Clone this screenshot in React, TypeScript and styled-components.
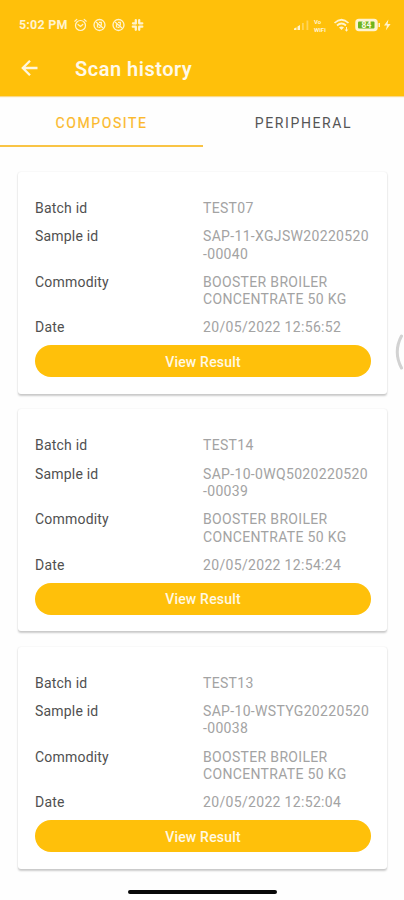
import React from "react";
import styled, { createGlobalStyle } from "styled-components";

const AMBER = "#ffc00a";
const CREAM = "#fff3cf";

const GlobalStyle = createGlobalStyle`
  * { box-sizing: border-box; }
  body { margin: 0; background: #fefefe; font-family: Roboto, sans-serif; }
`;

const Screen = styled.div`
  position: relative;
  display: flex;
  flex-direction: column;
  width: 404px;
  height: 900px;
  overflow: hidden;
  background: #fefefe;
`;

const Header = styled.header`
  flex: none;
  height: 96px;
  background: ${AMBER};
  box-shadow: 0 1px 1px #f9d98b;
`;

const StatusBar = styled.div`
  display: flex;
  align-items: center;
  justify-content: space-between;
  height: 34px;
  padding: 16px 12px 0 19px;
  color: ${CREAM};
`;

const StatusGroup = styled.div<{ $gap: number }>`
  display: flex;
  align-items: center;
  gap: ${(p) => p.$gap}px;
  svg { display: block; }
`;

const Clock = styled.span`
  width: 49px;
  font-size: 12.5px;
  font-weight: 700;
  line-height: 18px;
  white-space: nowrap;
  letter-spacing: 0.2px;
`;

const AppBar = styled.div`
  display: flex;
  align-items: center;
  height: 68px;
  padding: 0 21px;
  gap: 36px;
`;

const BackButton = styled.button`
  display: flex;
  width: 18px;
  height: 18px;
  padding: 0;
  border: 0;
  background: none;
`;

const Title = styled.h1`
  margin: 2px 0 0;
  color: #fff9e8;
  font-size: 20px;
  font-weight: 600;
  line-height: 24px;
  letter-spacing: 0.5px;
`;

const Tabs = styled.nav`
  display: flex;
  flex: none;
  height: 51px;
`;

const Tab = styled.button<{ $active?: boolean }>`
  flex: none;
  width: ${(p) => (p.$active ? 203 : 201)}px;
  padding: 4px 0 0;
  border: 0;
  border-bottom: 2px solid ${(p) => (p.$active ? "#f9c445" : "transparent")};
  background: none;
  color: ${(p) => (p.$active ? "#fbb92c" : "#555")};
  font-family: inherit;
  font-size: 14px;
  font-weight: 400;
  letter-spacing: 1.6px;
  -webkit-text-stroke: ${(p) => (p.$active ? "0.2px" : "0")};
`;

const List = styled.main`
  display: flex;
  flex-direction: column;
  gap: 15.4px;
  padding: 25px 17px 0 18px;
`;

const Card = styled.section`
  height: 222px;
  padding: 28px 16px 0 17px;
  border-radius: 3px;
  background: #fff;
  box-shadow: 0 1.5px 2px rgba(0, 0, 0, 0.2), 0 0 2px rgba(0, 0, 0, 0.06);
`;

const Fields = styled.dl`
  display: grid;
  grid-template-columns: 168px 1fr;
  row-gap: 10.8px;
  margin: 0 0 8.5px;
  font-size: 14px;
  line-height: 17.4px;
`;

const Label = styled.dt`
  color: #505050;
  letter-spacing: 0.2px;
`;

const Value = styled.dd`
  margin: 0;
  color: #a3a3a3;
  letter-spacing: 0.33px;
  white-space: pre;
`;

const ResultButton = styled.button`
  display: block;
  width: 336px;
  height: 32px;
  padding: 1px 0 0;
  border: 0;
  border-radius: 16px;
  background: ${AMBER};
  color: #fff9e4;
  font-family: inherit;
  font-size: 14px;
  font-weight: 500;
  letter-spacing: 0.2px;
`;

const EdgeHandle = styled.svg`
  position: absolute;
  top: 332px;
  right: 0;
`;

const HomeIndicator = styled.div`
  position: absolute;
  left: 128px;
  bottom: 6px;
  width: 149px;
  height: 4px;
  border-radius: 2px;
  background: #080808;
`;

const AlarmIcon = () => (
  <svg width="13" height="14" viewBox="0 0 13 14" fill="none" stroke={CREAM} strokeWidth="1.2" strokeLinecap="round">
    <circle cx="6.5" cy="7.5" r="5" />
    <path d="M4 6.5l2.5 2 2.3-2M.8 3.2l2-1.8M12.2 3.2l-2-1.8" />
  </svg>
);

const MutedIcon = () => (
  <svg width="13" height="14" viewBox="0 0 13 14" fill="none" stroke={CREAM} strokeWidth="1.3">
    <circle cx="6.5" cy="7" r="5.5" />
    <path d="M3 4l7 6M4.5 9.5V6.2M6 4.4h2.3v3.2M5.5 9.4h2" />
  </svg>
);

const SlackIcon = () => (
  <svg width="13" height="14" viewBox="0 0 13 14" fill="none" stroke={CREAM} strokeWidth="2.3" strokeLinecap="round">
    <path d="M4.8 2.2v3.3M8.3 5.3h3M8.2 8.8v3M1.8 8.7h3M2 5.3h2.8M8.2 2.2v3.1M8.3 8.7h3M4.8 8.8v3" />
  </svg>
);

const SignalIcon = () => (
  <svg width="17" height="12" viewBox="0 0 17 12" fill={CREAM}>
    <path d="M1 9.5l2.5-1.2V11H1zM4.5 7.5L7 6v5H4.5z" />
    <path d="M9 4h1.8v7H9zM13.5 1.5h1.8V11h-1.8z" opacity=".4" />
  </svg>
);

const VoWifiBadge = styled.span`
  display: flex;
  flex-direction: column;
  gap: 1px;
  width: 15px;
  font-size: 6px;
  font-weight: 700;
  line-height: 7px;
`;

const WifiIcon = () => (
  <svg width="18" height="14" viewBox="0 0 18 14" fill="none" stroke={CREAM} strokeWidth="1.7">
    <path d="M1.5 5Q8.5-1.5 15.5 5M4 7.5q4.5-4 9 0" />
    <path d="M6 9.5q2.5-2 5 0L8.5 12z" fill={CREAM} stroke="none" />
    <path d="M13.5 9v4M11.8 11.4l1.7 1.6 1.7-1.6" strokeWidth="1" />
  </svg>
);

const BatteryIcon = () => (
  <svg width="37" height="14" viewBox="0 0 37 14">
    <rect x="1" y="1.5" width="21" height="11" rx="3" fill="#fff6cf" stroke={CREAM} strokeWidth="1.5" />
    <rect x="3" y="3.5" width="16.5" height="7" rx="1" fill="#6fb51d" />
    <path d="M23.5 5h1.5v4h-1.5z" fill={CREAM} />
    <text x="11.5" y="10" textAnchor="middle" fontSize="8.5" fontWeight="700" fill="#fffbe0">84</text>
    <path d="M33.4 1.5L29 7.5h3l-1.2 5 4.8-6.5h-3z" fill={CREAM} />
  </svg>
);

const scans = [
  { batch: "TEST07", sample: "SAP-11-XGJSW20220520\n-00040", date: "20/05/2022 12:56:52" },
  { batch: "TEST14", sample: "SAP-10-0WQ5020220520\n-00039", date: "20/05/2022 12:54:24" },
  { batch: "TEST13", sample: "SAP-10-WSTYG20220520\n-00038", date: "20/05/2022 12:52:04" },
];

export default function App() {
  return (
    <Screen>
      <GlobalStyle />
      <Header>
        <StatusBar>
          <StatusGroup $gap={6}>
            <Clock>5:02 PM</Clock>
            <AlarmIcon />
            <MutedIcon />
            <MutedIcon />
            <SlackIcon />
          </StatusGroup>
          <StatusGroup $gap={4}>
            <SignalIcon />
            <VoWifiBadge><span>Vo</span><span>WiFi</span></VoWifiBadge>
            <WifiIcon />
            <BatteryIcon />
          </StatusGroup>
        </StatusBar>
        <AppBar>
          <BackButton aria-label="Back">
            <svg width="18" height="18" viewBox="0 0 18 18" fill="none" stroke="#fff6dd" strokeWidth="2.3">
              <path d="M16.5 9H2M9 1.8L1.8 9 9 16.2" />
            </svg>
          </BackButton>
          <Title>Scan history</Title>
        </AppBar>
      </Header>
      <Tabs>
        <Tab $active>COMPOSITE</Tab>
        <Tab>PERIPHERAL</Tab>
      </Tabs>
      <List>
        {scans.map((scan) => (
          <Card key={scan.batch}>
            <Fields>
              <Label>Batch id</Label>
              <Value>{scan.batch}</Value>
              <Label>Sample id</Label>
              <Value>{scan.sample}</Value>
              <Label>Commodity</Label>
              <Value>{"BOOSTER BROILER\nCONCENTRATE 50 KG"}</Value>
              <Label>Date</Label>
              <Value>{scan.date}</Value>
            </Fields>
            <ResultButton>View Result</ResultButton>
          </Card>
        ))}
      </List>
      <EdgeHandle width="12" height="40" viewBox="0 0 12 40" fill="none" stroke="#d2d2d2" strokeWidth="3" strokeLinecap="round">
        <path d="M9.5 4Q1 20 9.5 36" />
      </EdgeHandle>
      <HomeIndicator />
    </Screen>
  );
}
